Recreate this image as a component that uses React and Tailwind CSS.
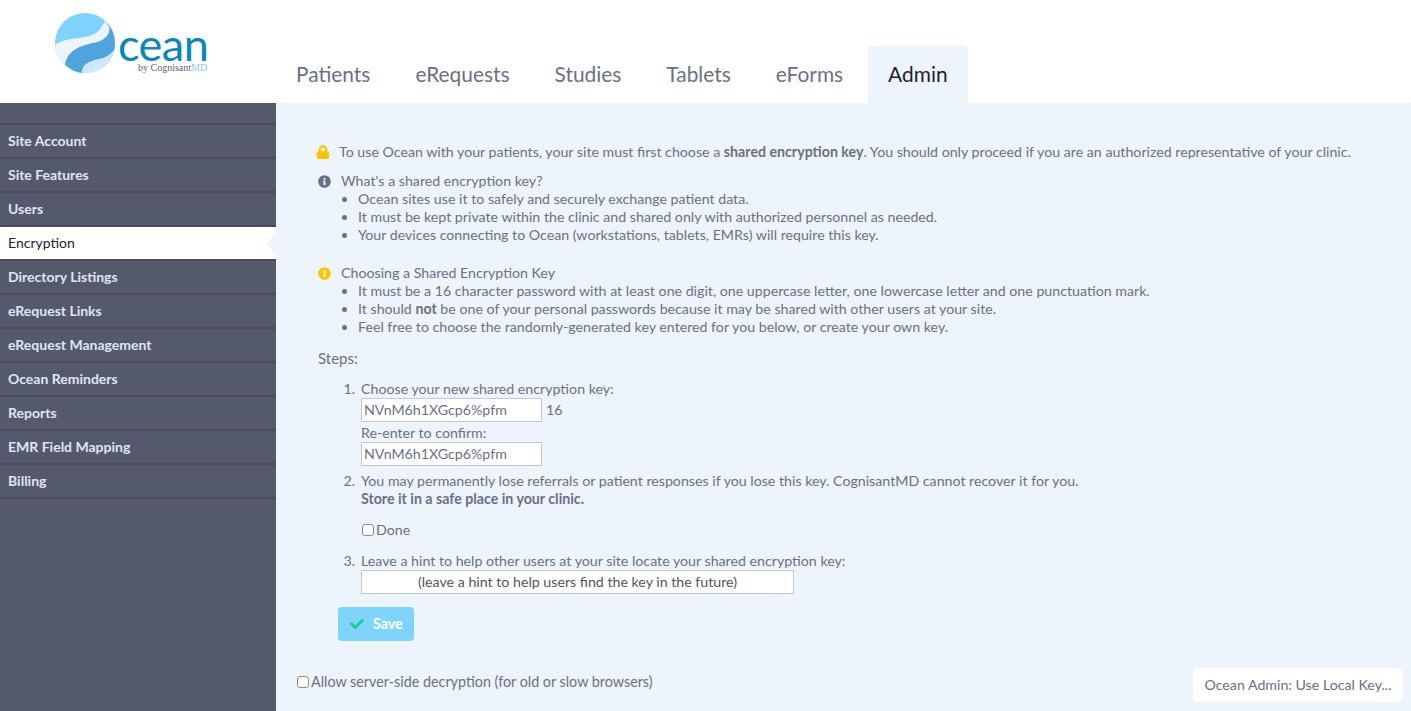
import { FaCheck, FaExclamationCircle, FaInfoCircle, FaLock } from "react-icons/fa";

const tabs = ["Patients", "eRequests", "Studies", "Tablets", "eForms", "Admin"];

const sideItems = [
  "Site Account",
  "Site Features",
  "Users",
  "Encryption",
  "Directory Listings",
  "eRequest Links",
  "eRequest Management",
  "Ocean Reminders",
  "Reports",
  "EMR Field Mapping",
  "Billing",
];

function Logo() {
  return (
    <div className="relative h-[103px] w-[276px] shrink-0">
      <svg className="absolute left-[55px] top-[13px]" width="60" height="60" viewBox="0 0 60 60">
        <defs>
          <clipPath id="ball">
            <circle cx="30" cy="30" r="30" />
          </clipPath>
        </defs>
        <g clipPath="url(#ball)">
          <rect width="60" height="60" fill="#7fd3fd" />
          <path d="M0 32C8 26 18 26 30 24C42 22 46 16 50 8L60 24L60 30L10 60L0 60Z" fill="#edf4fb" />
          <path d="M53 10C58 20 50 28 38 30C24 33 12 38 10 52L24 62L60 50L60 20Z" fill="#4ea4dc" />
          <path d="M27 60C26 52 34 48 44 46C50 45 55 42 60 36L60 60Z" fill="#cde9fd" />
        </g>
      </svg>
      <span className="absolute left-[118px] top-[27px] text-[45px] leading-[34px] tracking-[-0.5px] text-[#0a86bd]">cean</span>
      <span className="absolute left-[138px] top-[62px] font-['Liberation_Serif',serif] text-[10px] leading-[12px] text-[#5a6070]">
        by Cognisant<span className="text-[#8fc7ea]">MD</span>
      </span>
    </div>
  );
}

function Sidebar() {
  return (
    <aside className="w-[276px] shrink-0 bg-[#545a6b] pt-5">
      {sideItems.map((item) =>
        item === "Encryption" ? (
          <div
            key={item}
            className="relative -mb-0.5 flex h-9 items-center border-y-2 border-[#484c5c] bg-white pl-2 text-sm text-[#1f2233]"
          >
            {item}
            <span className="absolute right-0 top-[6px] h-0 w-0 border-y-[11px] border-r-[10px] border-y-transparent border-r-[#edf4fb]" />
          </div>
        ) : (
          <div
            key={item}
            className="-mb-0.5 flex h-9 items-center border-y-2 border-[#484c5c] pl-2 text-sm font-bold text-[#dfe6f0] last:mb-0"
          >
            {item}
          </div>
        ),
      )}
    </aside>
  );
}

function KeyInput({ value }) {
  return (
    <div className="flex h-6 w-[181px] items-center border border-[#c8c8c8] bg-white pl-[2px] text-[#6b7088]">
      {value}
    </div>
  );
}

function InfoBlock({ icon, title, items }) {
  return (
    <div className="flex">
      <div className="flex h-[18px] w-[25px] shrink-0 items-center pl-[2px]">{icon}</div>
      <div>
        <div className="leading-[18px]">{title}</div>
        <ul className="list-disc pl-[17px]">
          {items.map((item, i) => (
            <li key={i} className="leading-[18px]">
              {item}
            </li>
          ))}
        </ul>
      </div>
    </div>
  );
}

function Step({ num, children }) {
  return (
    <div className="flex">
      <span className="w-[45px] shrink-0 pr-1.5 text-right leading-[18px]">{num}.</span>
      <div>{children}</div>
    </div>
  );
}

export default function App() {
  return (
    <div className="flex h-[711px] w-[1411px] flex-col overflow-hidden bg-white font-['Lato',sans-serif] text-[14.19px] text-[#6b7088]">
      <header className="flex h-[103px] shrink-0">
        <Logo />
        <nav className="flex items-end">
          <div className="flex h-[57px]">
            {tabs.map((tab) => (
              <div
                key={tab}
                className={`mx-[2.5px] flex items-center px-5 pb-[2px] text-[20.9px] first:ml-0 ${
                  tab === "Admin" ? "rounded-t bg-[#edf4fb] text-[#1f2233]" : "text-[#6b7088]"
                }`}
              >
                {tab}
              </div>
            ))}
          </div>
        </nav>
      </header>
      <div className="flex min-h-0 flex-1">
        <Sidebar />
        <main className="relative flex-1 bg-[#edf4fb] pl-[20px] pt-[40px]">
          <div className="flex h-[18px] items-center">
            <FaLock className="ml-[20px] text-[#ffc400]" size={14} />
            <span className="ml-[9px]">
              To use Ocean with your patients, your site must first choose a <b>shared encryption key</b>. You should only proceed if you are an authorized representative of your clinic.
            </span>
          </div>
          <div className="mt-[11px] pl-[20px]">
            <InfoBlock
              icon={<FaInfoCircle size={13} className="text-[#6b7088]" />}
              title="What's a shared encryption key?"
              items={[
                "Ocean sites use it to safely and securely exchange patient data.",
                "It must be kept private within the clinic and shared only with authorized personnel as needed.",
                "Your devices connecting to Ocean (workstations, tablets, EMRs) will require this key.",
              ]}
            />
          </div>
          <div className="mt-[20px] pl-[20px]">
            <InfoBlock
              icon={<FaExclamationCircle size={13} className="text-[#ffc400]" />}
              title="Choosing a Shared Encryption Key"
              items={[
                "It must be a 16 character password with at least one digit, one uppercase letter, one lowercase letter and one punctuation mark.",
                <>
                  It should <b>not</b> be one of your personal passwords because it may be shared with other users at your site.
                </>,
                "Feel free to choose the randomly-generated key entered for you below, or create your own key.",
              ]}
            />
          </div>
          <div className="mt-[12px] pl-[22px] text-[15px] leading-[20px]">Steps:</div>
          <div className="mt-[12px] pl-[20px]">
            <Step num="1">
              <div className="leading-[18px]">Choose your new shared encryption key:</div>
              <div className="flex items-center">
                <KeyInput value="NVnM6h1XGcp6%pfm" />
                <span className="ml-1">16</span>
              </div>
              <div className="mt-[2px] leading-[18px]">Re-enter to confirm:</div>
              <KeyInput value="NVnM6h1XGcp6%pfm" />
            </Step>
          </div>
          <div className="mt-[6px] pl-[20px]">
            <Step num="2">
              <div className="leading-[18px]">You may permanently lose referrals or patient responses if you lose this key. CognisantMD cannot recover it for you.</div>
              <div className="font-bold leading-[18px]">Store it in a safe place in your clinic.</div>
              <label className="mt-[13px] flex items-center leading-[18px]">
                <span className="ml-px h-3 w-3 rounded-[3px] border border-[#8a8a8a] bg-white" />
                <span className="ml-[2px]">Done</span>
              </label>
            </Step>
          </div>
          <div className="mt-[13px] pl-[20px]">
            <Step num="3">
              <div className="leading-[18px]">Leave a hint to help other users at your site locate your shared encryption key:</div>
              <div className="flex h-[24px] w-[433px] items-center justify-center border border-[#c8c8c8] bg-white text-[#555]">
                (leave a hint to help users find the key in the future)
              </div>
            </Step>
          </div>
          <button className="ml-[42px] mt-[13px] flex h-[34px] w-[76px] items-center rounded bg-[#7fd4fd] pl-3 font-bold text-white">
            <FaCheck size={14} className="text-[#14cf8f]" />
            <span className="ml-[9px]">Save</span>
          </button>
          <label className="mt-[32px] flex items-center text-[14.33px] leading-[18px]">
            <span className="ml-px h-3 w-3 rounded-[3px] border border-[#8a8a8a] bg-white" />
            <span className="ml-[2px]">Allow server-side decryption (for old or slow browsers)</span>
          </label>
          <button className="absolute bottom-[9px] right-[8px] flex h-[34px] w-[210px] items-center justify-center rounded bg-white">
            Ocean Admin: Use Local Key...
          </button>
        </main>
      </div>
    </div>
  );
}
